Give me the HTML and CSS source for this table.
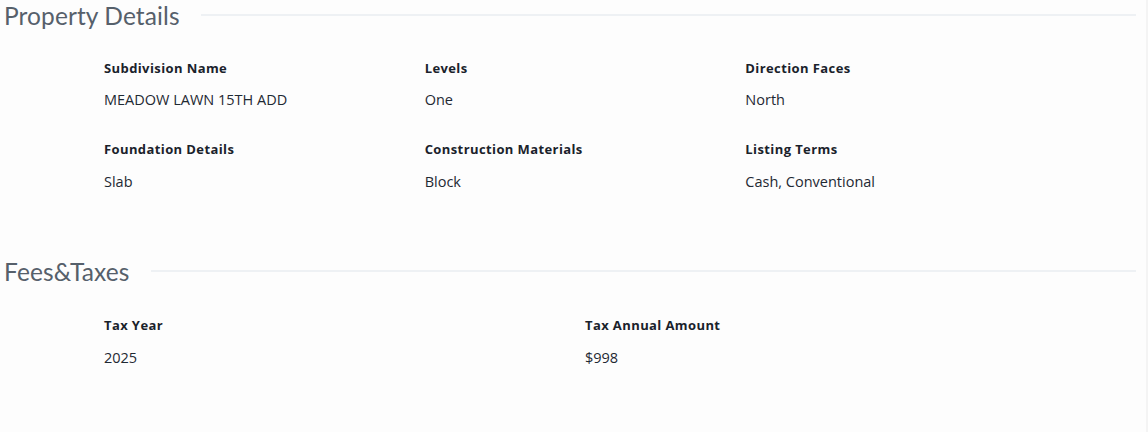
FILE: index.html
```html
<!DOCTYPE html>
<html>
<head>
<meta charset="utf-8">
<link rel="stylesheet" href="styles.css">
</head>
<body>
<div class="page">
  <section class="section">
    <div class="section-head">
      <h2 class="section-title">Property Details</h2>
      <div class="section-rule"></div>
    </div>
    <div class="grid grid-3">
      <div class="field"><div class="label">Subdivision Name</div><div class="value">MEADOW LAWN 15TH ADD</div></div>
      <div class="field"><div class="label">Levels</div><div class="value">One</div></div>
      <div class="field"><div class="label">Direction Faces</div><div class="value">North</div></div>
      <div class="field"><div class="label">Foundation Details</div><div class="value">Slab</div></div>
      <div class="field"><div class="label">Construction Materials</div><div class="value">Block</div></div>
      <div class="field"><div class="label">Listing Terms</div><div class="value">Cash, Conventional</div></div>
    </div>
  </section>
  <section class="section section-fees">
    <div class="section-head">
      <h2 class="section-title">Fees&amp;Taxes</h2>
      <div class="section-rule"></div>
    </div>
    <div class="grid grid-2">
      <div class="field"><div class="label">Tax Year</div><div class="value">2025</div></div>
      <div class="field"><div class="label">Tax Annual Amount</div><div class="value">$998</div></div>
    </div>
  </section>
</div>
</body>
</html>
```
FILE: styles.css
```css
html, body {
  margin: 0;
  padding: 0;
  background: #fdfdfd;
}
body {
  font-family: Lato, "Open Sans", sans-serif;
  color: #1f2933;
  width: 1148px;
  height: 432px;
  overflow: hidden;
  border-right: 2px solid #f4f4f4;
  box-sizing: border-box;
}
.page {
  padding: 1px 10px 0 4px;
}
.section-head {
  display: flex;
  align-items: center;
  gap: 21px;
  height: 28px;
}
.section-title {
  margin: 0;
  font-size: 24.5px;
  font-weight: 400;
  color: #56606b;
  white-space: nowrap;
  letter-spacing: 0.1px;
}
.section-rule {
  flex: 1;
  height: 2px;
  background: #eef1f4;
}
.grid {
  display: grid;
  width: 962px;
  margin-left: 100px;
  padding-top: 30px;
  row-gap: 31px;
}
.grid-3 { grid-template-columns: repeat(3, 1fr); }
.grid-2 { grid-template-columns: repeat(2, 1fr); padding-top: 31px; }
.field {
  display: flex;
  flex-direction: column;
  gap: 14px;
}
.grid-3 .field:nth-child(n+4),
.grid-2 .field {
  gap: 15px;
}
.label {
  font-family: "Open Sans", Lato, sans-serif;
  font-size: 13px;
  font-weight: 700;
  letter-spacing: 0.4px;
  color: #1a222b;
  line-height: 18px;
}
.value {
  font-family: "Open Sans", Lato, sans-serif;
  font-size: 14.5px;
  color: #1f2933;
  line-height: 18px;
}
.section-fees {
  margin-top: 66px;
}
```
